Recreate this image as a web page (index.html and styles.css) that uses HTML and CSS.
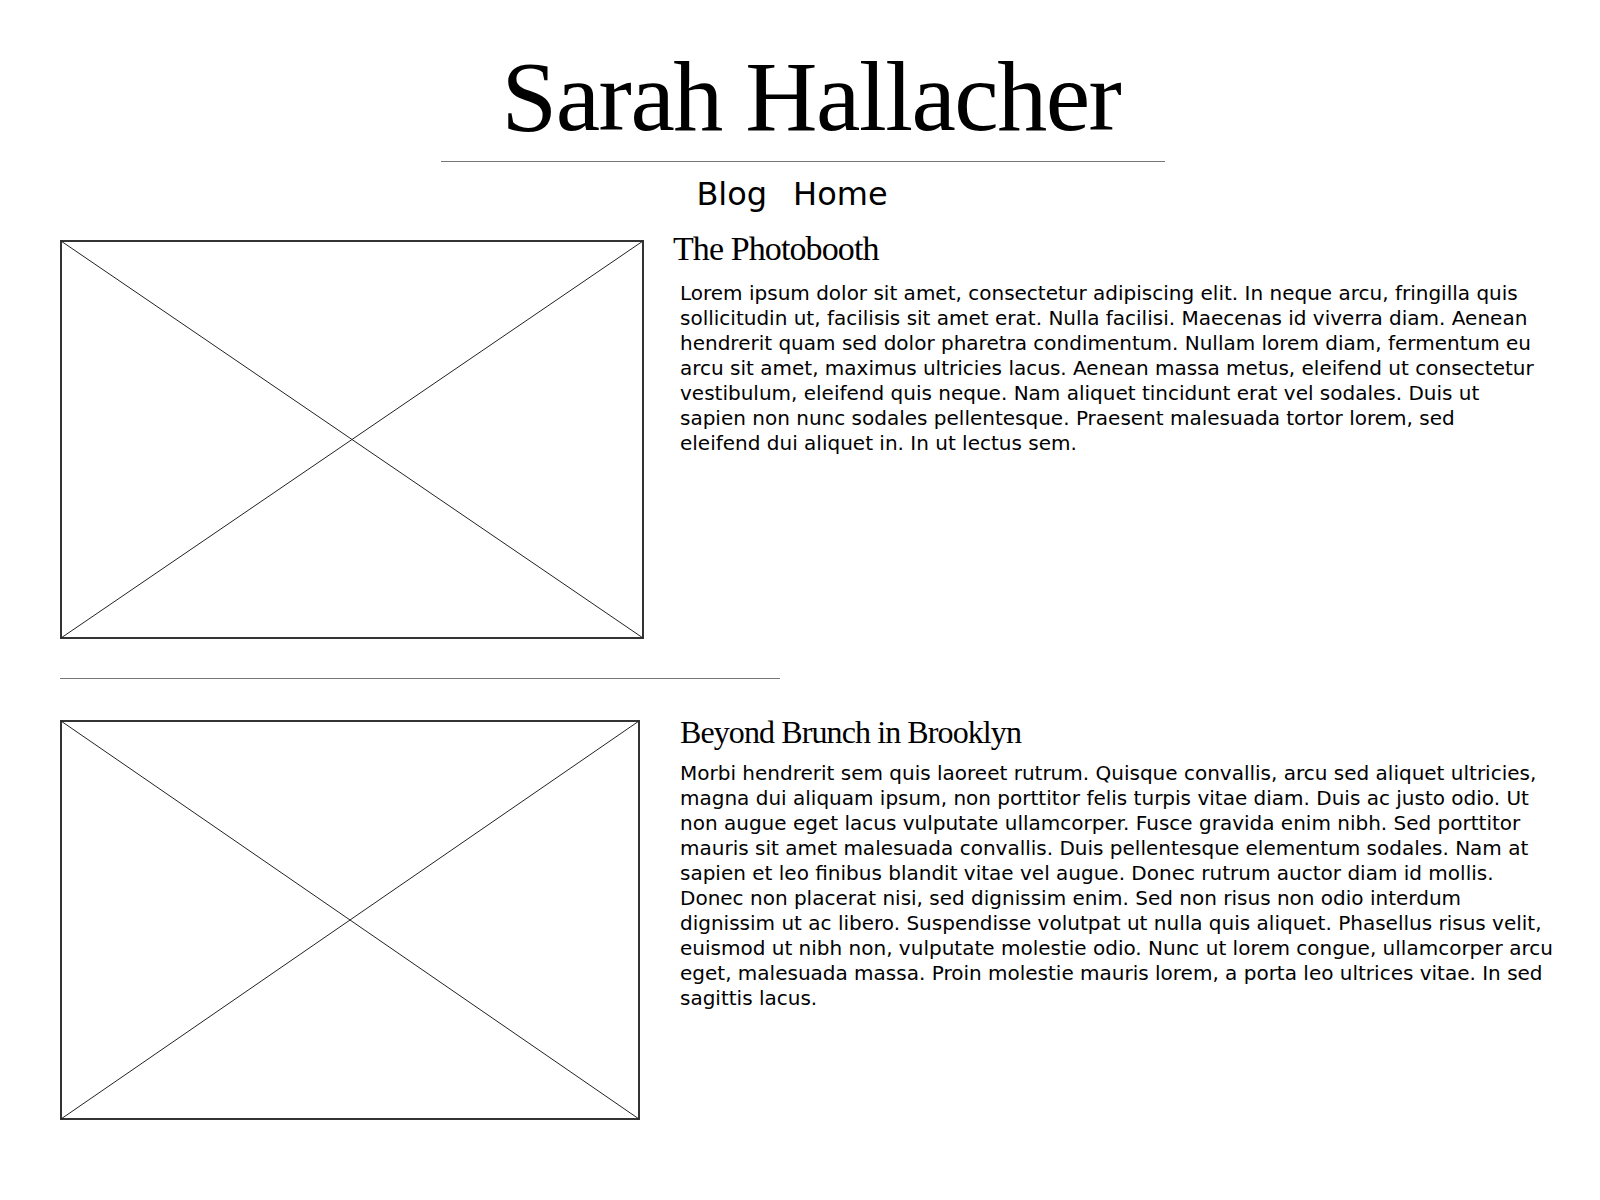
FILE: index.html
```html
<!DOCTYPE html>
<html lang="en">
<head>
<meta charset="utf-8">
<title>Sarah Hallacher</title>
<link rel="stylesheet" href="styles.css">
</head>
<body>
<header class="masthead">
  <h1 class="site-title">Sarah Hallacher</h1>
  <hr class="title-rule">
  <nav class="site-nav">
    <a href="#">Blog</a>
    <a href="#">Home</a>
  </nav>
</header>
<main class="posts">
  <article class="post post--first">
    <svg class="thumb" width="584" height="399" viewBox="0 0 584 399">
      <rect x="1" y="1" width="582" height="397" fill="#fff" stroke="#333" stroke-width="2"/>
      <line x1="1" y1="1" x2="583" y2="398" stroke="#222" stroke-width="1"/>
      <line x1="583" y1="1" x2="1" y2="398" stroke="#222" stroke-width="1"/>
    </svg>
    <div class="post-body">
      <h2 class="post-title">The Photobooth</h2>
      <p class="post-text">Lorem ipsum dolor sit amet, consectetur adipiscing elit. In neque arcu, fringilla quis sollicitudin ut, facilisis sit amet erat. Nulla facilisi. Maecenas id viverra diam. Aenean hendrerit quam sed dolor pharetra condimentum. Nullam lorem diam, fermentum eu arcu sit amet, maximus ultricies lacus. Aenean massa metus, eleifend ut consectetur vestibulum, eleifend quis neque. Nam aliquet tincidunt erat vel sodales. Duis ut sapien non nunc sodales pellentesque. Praesent malesuada tortor lorem, sed eleifend dui aliquet in. In ut lectus sem.</p>
    </div>
  </article>
  <hr class="post-rule">
  <article class="post post--second">
    <svg class="thumb" width="580" height="400" viewBox="0 0 580 400">
      <rect x="1" y="1" width="578" height="398" fill="#fff" stroke="#333" stroke-width="2"/>
      <line x1="1" y1="1" x2="579" y2="399" stroke="#222" stroke-width="1"/>
      <line x1="579" y1="1" x2="1" y2="399" stroke="#222" stroke-width="1"/>
    </svg>
    <div class="post-body">
      <h2 class="post-title">Beyond Brunch in Brooklyn</h2>
      <p class="post-text">Morbi hendrerit sem quis laoreet rutrum. Quisque convallis, arcu sed aliquet ultricies, magna dui aliquam ipsum, non porttitor felis turpis vitae diam. Duis ac justo odio. Ut non augue eget lacus vulputate ullamcorper. Fusce gravida enim nibh. Sed porttitor mauris sit amet malesuada convallis. Duis pellentesque elementum sodales. Nam at sapien et leo finibus blandit vitae vel augue. Donec rutrum auctor diam id mollis. Donec non placerat nisi, sed dignissim enim. Sed non risus non odio interdum dignissim ut ac libero. Suspendisse volutpat ut nulla quis aliquet. Phasellus risus velit, euismod ut nibh non, vulputate molestie odio. Nunc ut lorem congue, ullamcorper arcu eget, malesuada massa. Proin molestie mauris lorem, a porta leo ultrices vitae. In sed sagittis lacus.</p>
    </div>
  </article>
</main>
</body>
</html>
```

FILE: styles.css
```css
html, body {
  margin: 0;
  padding: 0;
  background: #fff;
  color: #000;
  font-family: "DejaVu Sans", Verdana, sans-serif;
}

.masthead {
  text-align: center;
}

.site-title {
  margin: 47px 0 0;
  padding-left: 22px;
  font-family: "Liberation Serif", "Times New Roman", serif;
  font-weight: normal;
  font-size: 100px;
  line-height: 100px;
  letter-spacing: -1.5px;
}

.title-rule {
  width: 724px;
  margin: 14px 0 0 calc(50% - 359px);
  border: 0;
  border-top: 1px solid #777;
  height: 0;
}

.site-nav {
  margin-top: 13px;
  font-size: 32px;
  line-height: 38px;
  display: flex;
  justify-content: center;
  gap: 26px;
  padding-right: 16px;
}

.site-nav a {
  color: #000;
  text-decoration: none;
}

.posts {
  padding: 0 44px 0 60px;
}

.post {
  display: flex;
  align-items: flex-start;
}

.post--first {
  margin-top: 17px;
}

.post--first .thumb {
  margin-top: 10px;
  margin-right: 36px;
}

.post--first .post-body {
  margin-right: 19px;
}

.post--second .thumb {
  margin-top: 6px;
  margin-right: 40px;
}

.thumb {
  flex: none;
  display: block;
}

.post-body {
  flex: 1;
  min-width: 0;
}

.post-title {
  margin: 0;
  font-family: "Liberation Serif", "Times New Roman", serif;
  font-weight: normal;
  font-size: 32px;
  letter-spacing: -0.9px;
  line-height: normal;
}

.post--first .post-title {
  font-size: 34px;
  margin-left: -7px;
}

.post-text {
  margin: 13px 0 0;
  font-size: 20px;
  line-height: 25px;
}

.post--second .post-text {
  margin-top: 10px;
}

.post-rule {
  width: 720px;
  margin: 39px 0 0;
  border: 0;
  border-top: 1px solid #777;
  height: 0;
}

.post--second {
  margin-top: 35px;
}
```
